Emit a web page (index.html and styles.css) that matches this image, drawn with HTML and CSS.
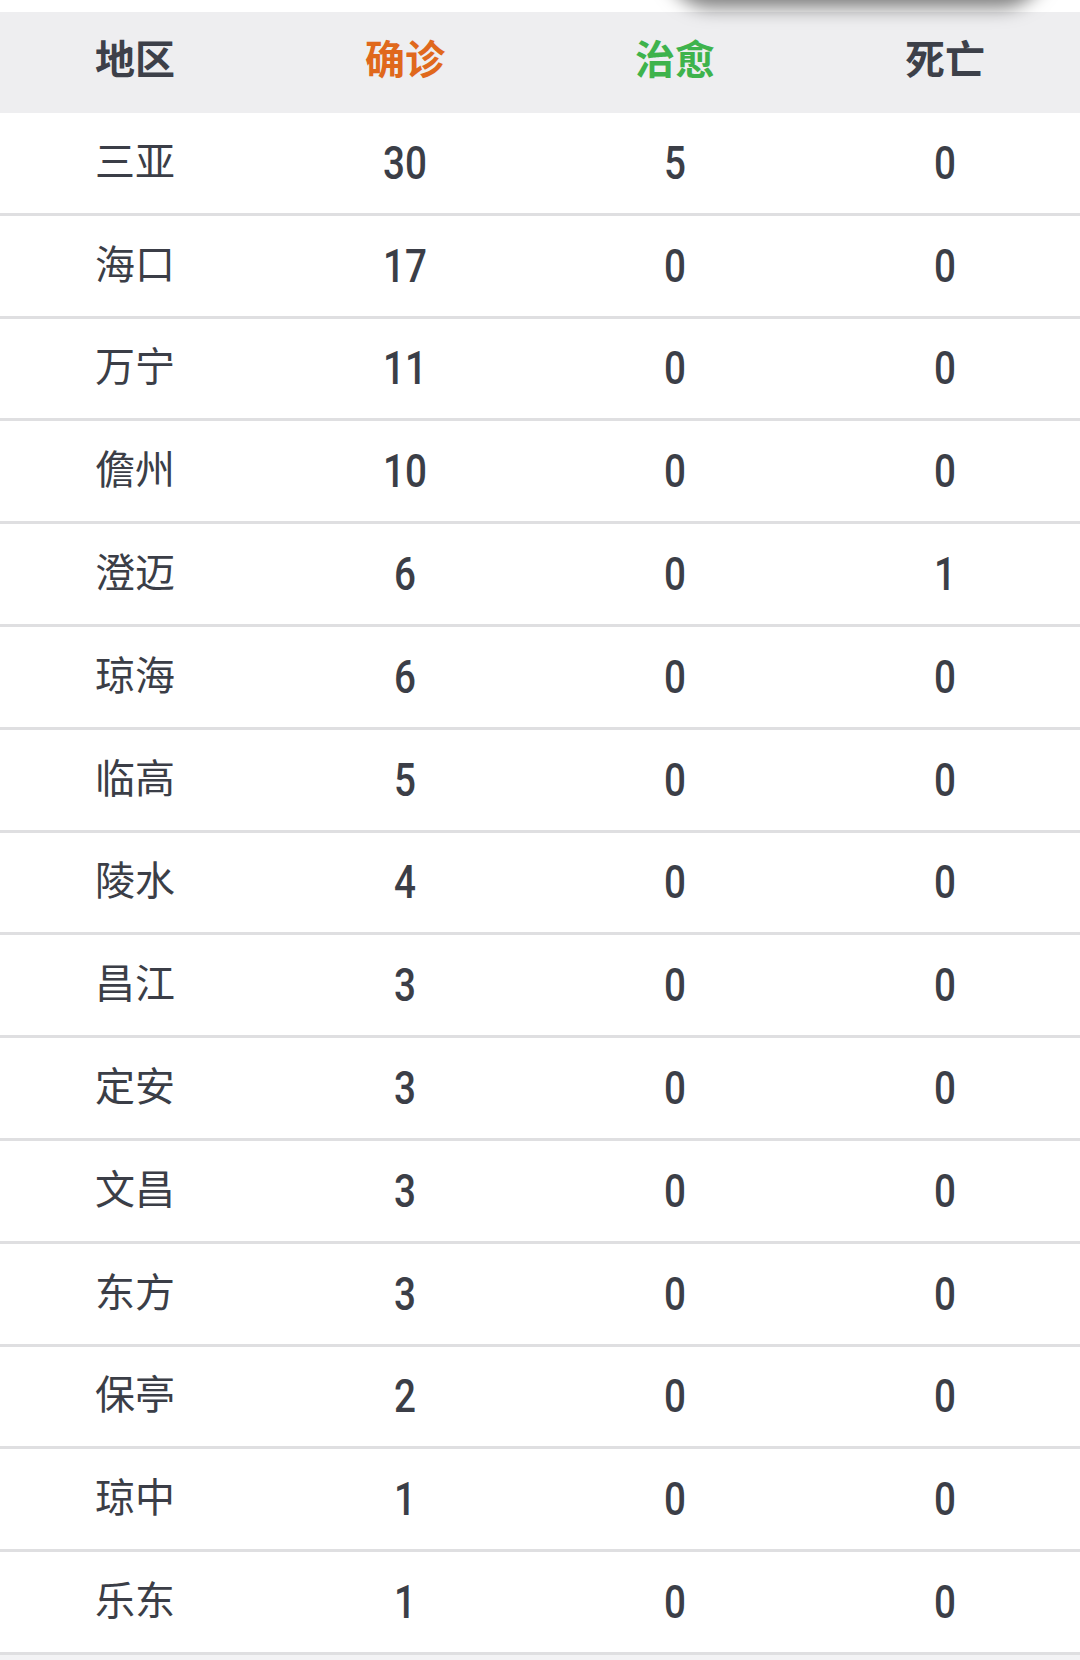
FILE: index.html
```html
<!DOCTYPE html>
<html lang="zh-CN">
<head>
<meta charset="utf-8">
<title>海南疫情</title>
<link rel="stylesheet" href="styles.css">
</head>
<body>
<div class="page">
  <div class="topbar"><div class="floating-shadow"></div></div>
  <div class="table">
    <div class="row head">
      <div class="cell cjk">地区</div>
      <div class="cell cjk confirmed">确诊</div>
      <div class="cell cjk cured">治愈</div>
      <div class="cell cjk">死亡</div>
    </div>
    <div class="row"><div class="cell cjk">三亚</div><div class="cell num">30</div><div class="cell num">5</div><div class="cell num">0</div></div>
    <div class="row"><div class="cell cjk">海口</div><div class="cell num">17</div><div class="cell num">0</div><div class="cell num">0</div></div>
    <div class="row"><div class="cell cjk">万宁</div><div class="cell num">11</div><div class="cell num">0</div><div class="cell num">0</div></div>
    <div class="row"><div class="cell cjk">儋州</div><div class="cell num">10</div><div class="cell num">0</div><div class="cell num">0</div></div>
    <div class="row"><div class="cell cjk">澄迈</div><div class="cell num">6</div><div class="cell num">0</div><div class="cell num">1</div></div>
    <div class="row"><div class="cell cjk">琼海</div><div class="cell num">6</div><div class="cell num">0</div><div class="cell num">0</div></div>
    <div class="row"><div class="cell cjk">临高</div><div class="cell num">5</div><div class="cell num">0</div><div class="cell num">0</div></div>
    <div class="row"><div class="cell cjk">陵水</div><div class="cell num">4</div><div class="cell num">0</div><div class="cell num">0</div></div>
    <div class="row"><div class="cell cjk">昌江</div><div class="cell num">3</div><div class="cell num">0</div><div class="cell num">0</div></div>
    <div class="row"><div class="cell cjk">定安</div><div class="cell num">3</div><div class="cell num">0</div><div class="cell num">0</div></div>
    <div class="row"><div class="cell cjk">文昌</div><div class="cell num">3</div><div class="cell num">0</div><div class="cell num">0</div></div>
    <div class="row"><div class="cell cjk">东方</div><div class="cell num">3</div><div class="cell num">0</div><div class="cell num">0</div></div>
    <div class="row"><div class="cell cjk">保亭</div><div class="cell num">2</div><div class="cell num">0</div><div class="cell num">0</div></div>
    <div class="row"><div class="cell cjk">琼中</div><div class="cell num">1</div><div class="cell num">0</div><div class="cell num">0</div></div>
    <div class="row"><div class="cell cjk">乐东</div><div class="cell num">1</div><div class="cell num">0</div><div class="cell num">0</div></div>
  </div>
</div>
</body>
</html>
```

FILE: styles.css
```css
html, body {
  margin: 0;
  padding: 0;
}
body {
  background: #f3f3f5;
  font-family: "Noto Sans CJK SC", "Noto Sans", sans-serif;
  color: #3b3e47;
  overflow: hidden;
}
.page {
  width: 1080px;
  height: 1660px;
  overflow: hidden;
  position: relative;
}
.topbar {
  height: 12px;
  background: #ffffff;
  position: relative;
  z-index: 2;
}
.floating-shadow {
  position: absolute;
  left: 668px;
  top: -50px;
  width: 376px;
  height: 50px;
  border-radius: 0 0 44px 44px;
  background: #ffffff;
  box-shadow: 0 5px 18px 3px rgba(0, 0, 0, 0.5);
}
.table {
  background: #ffffff;
  display: flex;
  flex-direction: column;
}
.row {
  display: grid;
  grid-template-columns: repeat(4, 1fr);
  align-items: center;
  height: 102.8px;
  box-sizing: border-box;
  border-bottom: 3px solid #dfdfe1;
}
.row.head {
  height: 101px;
  background: #eeeef0;
  border-bottom: none;
  font-weight: 700;
  color: #3d4049;
}
.cell {
  text-align: center;
}
.cjk {
  font-family: "Noto Sans CJK SC", sans-serif;
  font-size: 40px;
  line-height: 1;
}
.head .cjk {
  margin-top: -12px;
}
.row:not(.head) .cjk {
  margin-top: -8px;
}
.confirmed {
  color: #e0681c;
}
.cured {
  color: #3eb34c;
}
.num {
  font-family: Roboto, "Liberation Sans", sans-serif;
  font-size: 46px;
  font-weight: 500;
  line-height: 1;
  color: #3b3e47;
  transform: scaleX(0.84);
}
```
